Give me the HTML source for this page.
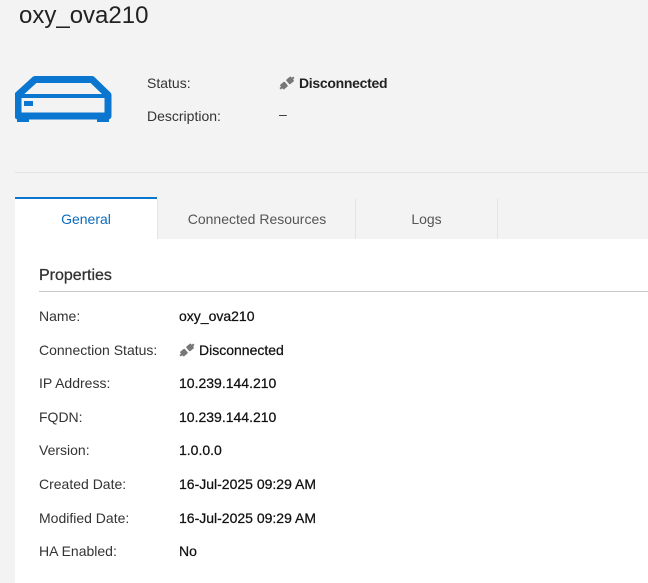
<!DOCTYPE html>
<html><head><style>
body{margin:0;width:648px;height:583px;background:#f3f3f3;font-family:"Liberation Sans",sans-serif;color:#333;overflow:hidden;position:relative}
.a{position:absolute;white-space:nowrap}
.lbl{font-size:14px;color:#333}
.v{font-size:14px;color:#111;-webkit-text-stroke:0.25px #111}
.val{font-size:14px;color:#222;font-weight:bold}
</style></head><body>
<div class="a" style="left:19px;top:2px;font-size:24px;color:#222">oxy_ova210</div>
<svg class="a" style="left:15px;top:76px" width="97" height="47" viewBox="0 0 97 47">
<path d="M20 3.5 H77 L93 19 V40 H3 V19 Z" fill="none" stroke="#0a76d0" stroke-width="7" stroke-linejoin="round"/>
<rect x="3" y="18" width="90" height="4" fill="#0a76d0"/>
<rect x="9" y="25" width="9" height="5" fill="#0a76d0"/>
<rect x="2" y="40" width="12" height="6" fill="#0a76d0"/>
<rect x="82" y="40" width="12" height="6" fill="#0a76d0"/>
</svg>
<div class="a lbl" style="left:147px;top:75px">Status:</div>
<div class="a lbl" style="left:147px;top:108px">Description:</div>
<svg class="a" style="left:279px;top:76px" width="16" height="14" viewBox="0 0 16 14"><g fill="#777" transform="rotate(-40 8 7)"><rect x="1" y="4" width="6" height="6" rx="1"/><rect x="9" y="4" width="6" height="6" rx="1"/><rect x="-1" y="6" width="3" height="2"/><rect x="14" y="6" width="3" height="2"/></g></svg>
<div class="a val" style="left:299px;top:75px;letter-spacing:-0.3px">Disconnected</div>
<div class="a" style="left:279px;top:106px;font-size:14px">–</div>
<div class="a" style="left:15px;top:172px;width:633px;height:1px;background:#e2e2e2"></div>
<div class="a" style="left:15px;top:239px;width:633px;height:344px;background:#fff"></div>
<div class="a" style="left:15px;top:197px;width:142px;height:42px;background:#fff;border-top:2px solid #0a76d0;box-sizing:border-box;text-align:center;line-height:40px;font-size:14px;color:#0a6cbf">General</div>
<div class="a" style="left:157px;top:199px;width:198px;height:40px;border-left:1px solid #e4e4e4;text-align:center;line-height:40px;font-size:14px;color:#555">Connected Resources</div>
<div class="a" style="left:355px;top:199px;width:141px;height:40px;border-left:1px solid #e4e4e4;border-right:1px solid #e4e4e4;text-align:center;line-height:40px;font-size:14px;color:#555">Logs</div>
<div class="a" style="left:39px;top:267px;font-size:16px;color:#333;-webkit-text-stroke:0.3px #333">Properties</div>
<div class="a" style="left:39px;top:291px;width:609px;height:1px;background:#c8c8c8"></div>
<div class="a lbl" style="left:39px;top:308px">Name:</div><div class="a v" style="left:179px;top:308px">oxy_ova210</div>
<div class="a lbl" style="left:39px;top:342px">Connection Status:</div>
<svg class="a" style="left:179px;top:343px" width="16" height="14" viewBox="0 0 16 14"><g fill="#777" transform="rotate(-40 8 7)"><rect x="1" y="4" width="6" height="6" rx="1"/><rect x="9" y="4" width="6" height="6" rx="1"/><rect x="-1" y="6" width="3" height="2"/><rect x="14" y="6" width="3" height="2"/></g></svg>
<div class="a v" style="left:199px;top:342px">Disconnected</div>
<div class="a lbl" style="left:39px;top:375px">IP Address:</div><div class="a v" style="left:179px;top:375px">10.239.144.210</div>
<div class="a lbl" style="left:39px;top:409px">FQDN:</div><div class="a v" style="left:179px;top:409px">10.239.144.210</div>
<div class="a lbl" style="left:39px;top:442px">Version:</div><div class="a v" style="left:179px;top:442px">1.0.0.0</div>
<div class="a lbl" style="left:39px;top:476px">Created Date:</div><div class="a v" style="left:179px;top:476px">16-Jul-2025 09:29 AM</div>
<div class="a lbl" style="left:39px;top:510px">Modified Date:</div><div class="a v" style="left:179px;top:510px">16-Jul-2025 09:29 AM</div>
<div class="a lbl" style="left:39px;top:543px">HA Enabled:</div><div class="a v" style="left:179px;top:543px">No</div>
</body></html>
